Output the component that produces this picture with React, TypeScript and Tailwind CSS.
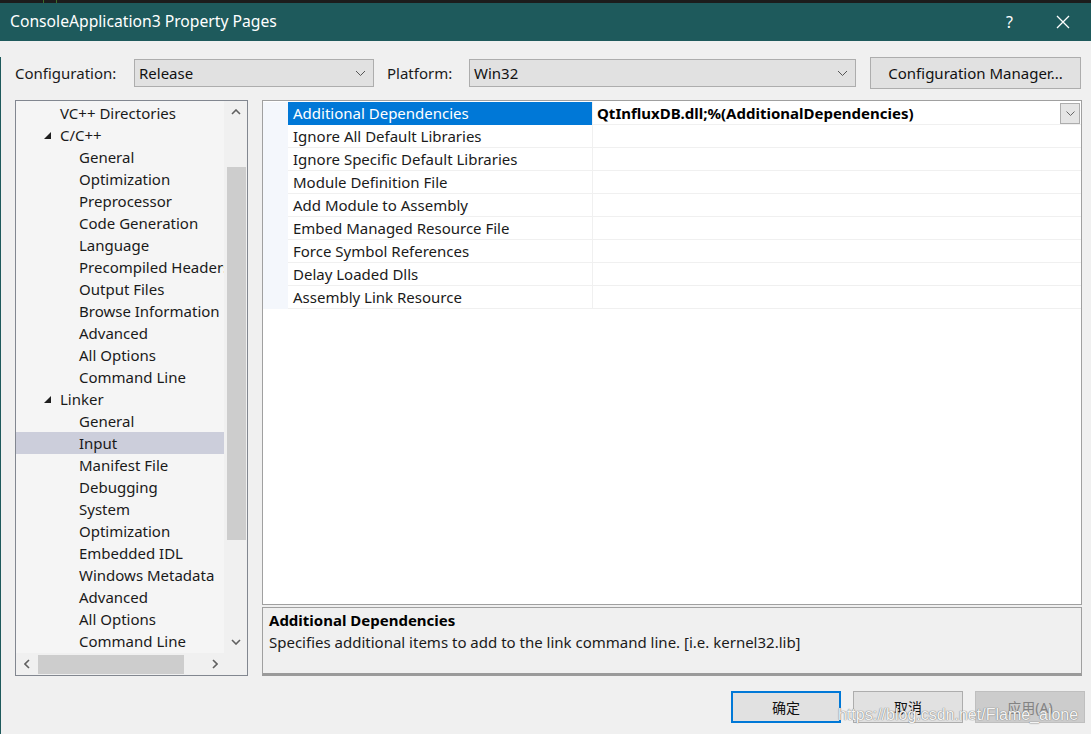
import React from "react";

const F = { fontFamily: '"Noto Sans", "Noto Sans CJK SC", sans-serif' };

type TreeItem = { label: string; level: 1 | 2; expanded?: boolean; selected?: boolean };

const tree: TreeItem[] = [
  { label: "VC++ Directories", level: 1 },
  { label: "C/C++", level: 1, expanded: true },
  { label: "General", level: 2 },
  { label: "Optimization", level: 2 },
  { label: "Preprocessor", level: 2 },
  { label: "Code Generation", level: 2 },
  { label: "Language", level: 2 },
  { label: "Precompiled Headers", level: 2 },
  { label: "Output Files", level: 2 },
  { label: "Browse Information", level: 2 },
  { label: "Advanced", level: 2 },
  { label: "All Options", level: 2 },
  { label: "Command Line", level: 2 },
  { label: "Linker", level: 1, expanded: true },
  { label: "General", level: 2 },
  { label: "Input", level: 2, selected: true },
  { label: "Manifest File", level: 2 },
  { label: "Debugging", level: 2 },
  { label: "System", level: 2 },
  { label: "Optimization", level: 2 },
  { label: "Embedded IDL", level: 2 },
  { label: "Windows Metadata", level: 2 },
  { label: "Advanced", level: 2 },
  { label: "All Options", level: 2 },
  { label: "Command Line", level: 2 },
];

const props = [
  "Additional Dependencies",
  "Ignore All Default Libraries",
  "Ignore Specific Default Libraries",
  "Module Definition File",
  "Add Module to Assembly",
  "Embed Managed Resource File",
  "Force Symbol References",
  "Delay Loaded Dlls",
  "Assembly Link Resource",
];

function Chevron({ dir, color = "#606060" }: { dir: "up" | "down" | "left" | "right"; color?: string }) {
  const d =
    dir === "down"
      ? "M1 1 L5 5 L9 1"
      : dir === "up"
      ? "M1 5 L5 1 L9 5"
      : dir === "left"
      ? "M5 1 L1 5 L5 9"
      : "M1 1 L5 5 L1 9";
  const w = dir === "up" || dir === "down" ? 10 : 6;
  const h = dir === "up" || dir === "down" ? 6 : 10;
  return (
    <svg width={w} height={h} viewBox={`0 0 ${w} ${h}`}>
      <path d={d} fill="none" stroke={color} strokeWidth="1.6" />
    </svg>
  );
}

function Combo({ value, width }: { value: string; width: string }) {
  return (
    <div className={`${width} shrink-0 h-[28px] flex items-center justify-between border border-[#adadad] bg-[#e1e1e1] pl-[4px] pr-[7px] text-[15px] text-[#111]`}>
      <span>{value}</span>
      <svg width="11" height="7" viewBox="0 0 11 7">
        <path d="M1 1 L5.5 5.5 L10 1" fill="none" stroke="#555" strokeWidth="1" />
      </svg>
    </div>
  );
}

export default function App() {
  return (
    <div style={F} className="relative w-[1091px] h-[734px] overflow-hidden bg-[#f0f0f0] text-[#1a1a1a]">
      {/* top dark strip */}
      <div className="h-[3px] bg-[#1c1c1c] flex">
        <div className="w-[43px]" />
        <div className="w-[1px] bg-[#3c6e2a]" />
        <div className="w-[12px]" />
        <div className="w-[1px] bg-[#3c6e2a]" />
      </div>
      {/* title bar */}
      <div className="h-[38px] bg-[#1e5a5c] flex items-center justify-between pl-[10px] text-white">
        <span className="text-[15.7px] leading-none">ConsoleApplication3 Property Pages</span>
        <div className="flex items-center">
          <span className="text-[16px] mr-[43px]">?</span>
          <svg width="14" height="14" viewBox="0 0 14 14" className="mr-[21px]">
            <path d="M1 1 L13 13 M13 1 L1 13" stroke="white" strokeWidth="1.3" />
          </svg>
        </div>
      </div>

      <div className="border-l border-[#1e5a5c] h-[693px] pl-[14px] pr-[10px]">
        {/* config row */}
        <div className="flex items-center h-[32px] mt-[16px] text-[15px]">
          <span className="w-[119px] shrink-0">Configuration:</span>
          <Combo value="Release" width="w-[240px]" />
          <span className="ml-[13px] w-[82px] shrink-0">Platform:</span>
          <Combo value="Win32" width="w-[387px]" />
          <button className="ml-[14px] shrink-0 w-[211px] h-[32px] border border-[#adadad] bg-[#e1e1e1] text-[15px] text-[#111]">
            Configuration Manager...
          </button>
        </div>

        {/* panels */}
        <div className="flex mt-[11px] gap-[14px]">
          {/* tree */}
          <div className="w-[233px] shrink-0 h-[576px] border border-[#828790] bg-[#f0f0f0] flex flex-col">
            <div className="flex flex-1">
              <div className="w-[208px] pt-[1px] bg-[#f5f5f5] overflow-hidden">
                {tree.map((t, i) => (
                  <div
                    key={i}
                    className={`h-[22px] flex items-center whitespace-nowrap text-[15px] ${
                      t.selected ? "bg-[#cccedb]" : ""
                    } ${t.level === 1 ? "pl-[28px]" : "pl-[63px]"}`}
                  >
                    {t.level === 1 && (
                      <span className="w-[16px] shrink-0 flex">
                        {t.expanded && (
                          <svg width="7" height="7" viewBox="0 0 7 7">
                            <polygon points="7,0 7,7 0,7" fill="#1e1e1e" />
                          </svg>
                        )}
                      </span>
                    )}
                    <span>{t.label}</span>
                  </div>
                ))}
              </div>
              {/* vertical scrollbar */}
              <div className="w-[20px] ml-[2px] flex flex-col items-center bg-[#f0f0f0]">
                <div className="h-[22px] flex items-center justify-center">
                  <Chevron dir="up" />
                </div>
                <div className="h-[44px]" />
                <div className="w-[19px] h-[373px] bg-[#cdcdcd]" />
                <div className="flex-1" />
                <div className="h-[22px] flex items-center justify-center">
                  <Chevron dir="down" />
                </div>
              </div>
            </div>
            {/* horizontal scrollbar */}
            <div className="h-[22px] flex items-center">
              <div className="w-[22px] flex justify-center">
                <Chevron dir="left" />
              </div>
              <div className="w-[146px] h-[19px] bg-[#cdcdcd]" />
              <div className="w-[26px]" />
              <div className="w-[10px] flex justify-center">
                <Chevron dir="right" />
              </div>
            </div>
          </div>

          {/* right side */}
          <div className="flex flex-col w-[820px] shrink-0">
            <div className="h-[505px] border border-[#a0a0a0] bg-white pt-[1px]">
              {props.map((p, i) => (
                <div key={i} className="flex h-[23px] text-[15px]">
                  <div className="w-[25px] bg-[#f4f7fc]" />
                  <div
                    className={`w-[304px] flex items-center pl-[5px] border-b ${
                      i === 0 ? "bg-[#0078d7] text-white border-[#0078d7]" : "border-[#f0f0f0]"
                    }`}
                  >
                    {p}
                  </div>
                  <div className="flex-1 flex items-center justify-between border-l border-b border-[#f0f0f0] pl-[4px]">
                    {i === 0 && (
                      <>
                        <span className="font-bold text-[#000]">QtInfluxDB.dll;%(AdditionalDependencies)</span>
                        <div className="w-[20px] h-[21px] mr-[1px] border border-[#adadad] bg-[#e5e5e5] flex items-center justify-center">
                          <svg width="9" height="5" viewBox="0 0 9 5">
                            <path d="M0.5 0.5 L4.5 4.5 L8.5 0.5" fill="none" stroke="#666" strokeWidth="1" />
                          </svg>
                        </div>
                      </>
                    )}
                  </div>
                </div>
              ))}
            </div>
            <div className="mt-[2px] h-[69px] border border-[#a0a0a0] border-b-[3px] border-b-[#9a9a9a] bg-[#f0f0f0] px-[6px] pt-[1px] text-[15px]">
              <div className="font-bold leading-[22px] text-[#000]">Additional Dependencies</div>
              <div className="leading-[22px]">Specifies additional items to add to the link command line. [i.e. kernel32.lib]</div>
            </div>
          </div>
        </div>

        {/* buttons */}
        <div className="flex justify-end gap-[12px] mt-[15px] mr-[-4px]">
          <button className="w-[110px] h-[32px] border-2 border-[#0078d7] bg-[#e1e1e1] text-[14px] text-[#111]">确定</button>
          <button className="w-[110px] h-[32px] border border-[#adadad] bg-[#e1e1e1] text-[14px] text-[#111]">取消</button>
          <button className="w-[110px] h-[32px] border border-[#bfbfbf] bg-[#cccccc] text-[14px] text-[#838383]">应用(A)</button>
        </div>
      </div>

      {/* watermark */}
      <div
        className="absolute left-[838px] top-[703px] text-[16px] text-[#f4f4f4] [text-shadow:0_0_1px_#7a7a7a,0_0_1px_#7a7a7a]"
        style={{ fontFamily: '"Liberation Sans", sans-serif' }}
      >
        https://blog.csdn.net/Flame_alone
      </div>
    </div>
  );
}
